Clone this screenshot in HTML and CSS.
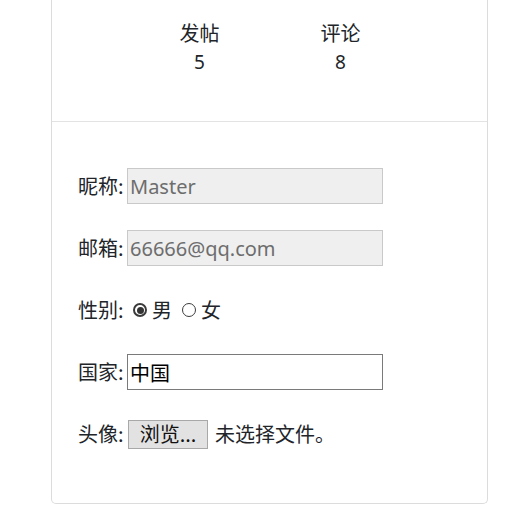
FILE: index.html
```html
<!DOCTYPE html>
<html lang="zh">
<head>
<meta charset="utf-8">
<title>个人资料</title>
<link rel="stylesheet" href="styles.css">
</head>
<body>
<div class="card">
  <div class="stats">
    <div class="stat"><div class="stat-label">发帖</div><div class="stat-num">5</div></div>
    <div class="stat"><div class="stat-label">评论</div><div class="stat-num">8</div></div>
  </div>
  <form class="form">
    <div class="row"><span class="label">昵称:</span><input class="field disabled" type="text" value="Master" disabled></div>
    <div class="row"><span class="label">邮箱:</span><input class="field disabled" type="text" value="66666@qq.com" disabled></div>
    <div class="row">
      <span class="label">性别:</span>
      <label class="opt"><span class="radio checked"></span>男</label>
      <label class="opt"><span class="radio"></span>女</label>
    </div>
    <div class="row"><span class="label">国家:</span><input class="field" type="text" value="中国"></div>
    <div class="row"><span class="label">头像:</span><button class="browse" type="button">浏览...</button><span class="nofile">未选择文件。</span></div>
  </form>
</div>
</body>
</html>
```
FILE: styles.css
```css
* { box-sizing: border-box; }
html, body { margin: 0; padding: 0; background: #fff; }
body {
  font-family: "Noto Sans", "Noto Sans CJK SC", sans-serif;
  color: #212529;
  font-size: 20px;
}
.card {
  margin-left: 51px;
  width: 437px;
  border: 1px solid #dcdcdc;
  border-top: none;
  border-radius: 0 0 5px 5px;
}
.stats {
  height: 122px;
  border-bottom: 1px solid #e3e3e3;
  display: flex;
  padding-left: 77px;
  padding-top: 18px;
}
.stat {
  width: 141px;
  text-align: center;
  font-family: "Noto Sans CJK SC", sans-serif;
}
.stat-label { line-height: 29px; }
.stat-num { font-family: "Noto Sans", sans-serif; font-size: 19px; line-height: 31px; }
.form {
  padding: 46px 0 51px 26px;
  display: flex;
  flex-direction: column;
  gap: 26px;
}
.row {
  height: 36px;
  display: flex;
  align-items: center;
  line-height: 1;
  font-family: "Noto Sans CJK SC", sans-serif;
}
.label { width: 49px; flex: none; }
.field {
  width: 256px;
  height: 36px;
  border: 1px solid #7a7a7a;
  padding: 0 2px;
  font-family: "Noto Sans", "Noto Sans CJK SC", sans-serif;
  font-size: 20px;
  color: #000;
  background: #fff;
  outline: none;
}
.field.disabled {
  background: #efefef;
  border-color: #c9c9c9;
  color: #6d6d6d;
}
.opt { display: flex; align-items: center; margin-right: 10px; }
.opt:first-of-type { margin-left: 6px; }
.radio {
  width: 14px;
  height: 14px;
  border: 1px solid #3c3c3c;
  border-radius: 50%;
  margin-right: 5px;
  position: relative;
  flex: none;
}
.radio.checked { border: 2px solid #3a3a3a; }
.radio.checked::after {
  content: "";
  position: absolute;
  left: 1.5px; top: 1.5px;
  width: 7px; height: 7px;
  border-radius: 50%;
  background: #333;
}
.browse {
  margin-left: 1px;
  width: 80px;
  height: 29px;
  padding: 0;
  border: 1px solid #a8a8a8;
  background: #e2e2e2;
  font-family: "Noto Sans CJK SC", sans-serif;
  font-size: 20px;
  color: #111;
  line-height: 1;
}
.nofile { margin-left: 7px; }
```
